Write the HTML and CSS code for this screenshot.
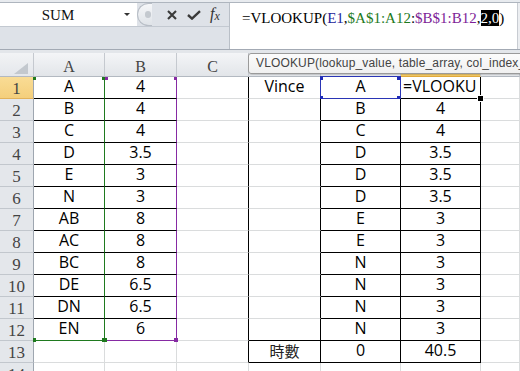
FILE: index.html
```html
<!DOCTYPE html>
<html>
<head>
<meta charset="utf-8">
<link rel="stylesheet" href="styles.css">
</head>
<body>
<div class="topline"></div>
<div class="fbar">
  <div class="fbar-left">
    <div class="fbar-top">
      <div class="namebox"><span class="nb-text">SUM</span><span class="nb-arrow"></span></div>
      <div class="grip"><span class="grip-dot"></span></div>
      <div class="btns">
        <svg class="ic-x" width="10" height="10" viewBox="0 0 10 10"><path d="M1 1 L9 9 M9 1 L1 9" stroke="#3a3a3a" stroke-width="2.1" fill="none"/></svg>
        <svg class="ic-ok" width="14" height="10" viewBox="0 0 14 10"><path d="M1 5 L5 8.6 L13 1.2" stroke="#3a3a3a" stroke-width="2.4" fill="none"/></svg>
        <span class="fx">f<span class="fx-x">x</span></span>
      </div>
    </div>
  </div>
  <div class="formula">=VLOOKUP(<span class="ref-e">E1</span>,<span class="ref-a">$A$1:A12</span>:<span class="ref-b">$B$1:B12</span>,<span class="sel">2,0</span>)</div>
  <div class="expand"></div>
</div>
<div class="strip"></div>
<div class="sheet">
  <div class="grid">
    <div class="c corner"><svg width="14" height="11" viewBox="0 0 14 11"><polygon points="14,0 14,11 0,11" fill="#c3c8ce"/></svg></div>
    <div class="c ch">A</div><div class="c ch">B</div><div class="c ch">C</div><div class="c ch"></div><div class="c ch"></div><div class="c ch hl"></div><div class="c ch"></div>

    <div class="c rh hl">1</div><div class="c kb gr">A</div><div class="c kb pr">4</div><div class="c kr"></div><div class="c kr">Vince</div><div class="c kr kb">A</div><div class="c kr kb left">=VLOOKU</div><div class="c"></div>
    <div class="c rh">2</div><div class="c kb gr">B</div><div class="c kb pr">4</div><div class="c kr"></div><div class="c kr"></div><div class="c kr kb">B</div><div class="c kr kb">4</div><div class="c"></div>
    <div class="c rh">3</div><div class="c kb gr">C</div><div class="c kb pr">4</div><div class="c kr"></div><div class="c kr"></div><div class="c kr kb">C</div><div class="c kr kb">4</div><div class="c"></div>
    <div class="c rh">4</div><div class="c kb gr">D</div><div class="c kb pr">3.5</div><div class="c kr"></div><div class="c kr"></div><div class="c kr kb">D</div><div class="c kr kb">3.5</div><div class="c"></div>
    <div class="c rh">5</div><div class="c kb gr">E</div><div class="c kb pr">3</div><div class="c kr"></div><div class="c kr"></div><div class="c kr kb">D</div><div class="c kr kb">3.5</div><div class="c"></div>
    <div class="c rh">6</div><div class="c kb gr">N</div><div class="c kb pr">3</div><div class="c kr"></div><div class="c kr"></div><div class="c kr kb">D</div><div class="c kr kb">3.5</div><div class="c"></div>
    <div class="c rh">7</div><div class="c kb gr">AB</div><div class="c kb pr">8</div><div class="c kr"></div><div class="c kr"></div><div class="c kr kb">E</div><div class="c kr kb">3</div><div class="c"></div>
    <div class="c rh">8</div><div class="c kb gr">AC</div><div class="c kb pr">8</div><div class="c kr"></div><div class="c kr"></div><div class="c kr kb">E</div><div class="c kr kb">3</div><div class="c"></div>
    <div class="c rh">9</div><div class="c kb gr">BC</div><div class="c kb pr">8</div><div class="c kr"></div><div class="c kr"></div><div class="c kr kb">N</div><div class="c kr kb">3</div><div class="c"></div>
    <div class="c rh">10</div><div class="c kb gr">DE</div><div class="c kb pr">6.5</div><div class="c kr"></div><div class="c kr"></div><div class="c kr kb">N</div><div class="c kr kb">3</div><div class="c"></div>
    <div class="c rh">11</div><div class="c kb gr">DN</div><div class="c kb pr">6.5</div><div class="c kr"></div><div class="c kr"></div><div class="c kr kb">N</div><div class="c kr kb">3</div><div class="c"></div>
    <div class="c rh">12</div><div class="c gb gr">EN</div><div class="c pb pr">6</div><div class="c kr"></div><div class="c kr kb"></div><div class="c kr kb">N</div><div class="c kr kb">3</div><div class="c"></div>
    <div class="c rh">13</div><div class="c"></div><div class="c"></div><div class="c kr"></div><div class="c kr kb cjk">時數</div><div class="c kr kb">0</div><div class="c kr kb">40.5</div><div class="c"></div>
    <div class="c rh">14</div><div class="c"></div><div class="c"></div><div class="c"></div><div class="c"></div><div class="c"></div><div class="c"></div><div class="c"></div>
  </div>

  <div class="mk sq-g" style="left:33px;top:24px;width:3px;height:3px"></div>
  <div class="mk sq-g" style="left:102px;top:24px;width:3px;height:3px"></div>
  <div class="mk sq-p" style="left:105px;top:24px;width:3px;height:3px"></div>
  <div class="mk sq-p" style="left:174px;top:24px;width:3px;height:3px"></div>
  <div class="mk sq-g" style="left:33px;top:285px;width:3px;height:4px"></div>
  <div class="mk sq-g" style="left:102px;top:285px;width:5px;height:4px"></div>
  <div class="mk sq-p" style="left:174px;top:285px;width:4px;height:4px"></div>

  <div class="mk e1box"></div>
  <div class="mk sq-b" style="left:320px;top:24px"></div>
  <div class="mk sq-b" style="left:320px;top:43px"></div>
  <div class="mk sq-b" style="left:397px;top:24px"></div>
  <div class="mk sq-b" style="left:397px;top:43px"></div>
  <div class="mk handle"></div>

  <div class="tip">VLOOKUP(lookup_value, table_array, col_index_</div>
</div>
</body>
</html>
```

FILE: styles.css
```css
html, body {
  margin: 0;
  padding: 0;
}
body {
  width: 520px;
  height: 371px;
  overflow: hidden;
  background: #dee2e8;
  position: relative;
}
.topline {
  height: 2px;
  background: #e8ebef;
  border-bottom: 1px solid #aeb5be;
}
.fbar {
  display: flex;
  height: 46px;
  border-bottom: 1px solid #a3aab4;
}
.fbar-left {
  width: 229px;
  border-right: 1px solid #b9bfc7;
  background: #dee2e8;
}
.fbar-top {
  display: flex;
  height: 23px;
  border-bottom: 1px solid #c3c9d1;
}
.namebox {
  width: 137px;
  background: #fff;
  display: flex;
  align-items: center;
}
.nb-text {
  width: 116px;
  text-align: center;
  font-family: "Liberation Serif", serif;
  font-size: 15px;
  color: #111;
  padding-top: 1px;
}
.nb-arrow {
  margin-left: 8px;
  width: 0;
  height: 0;
  border-left: 3px solid transparent;
  border-right: 3px solid transparent;
  border-top: 3px solid #333;
}
.grip {
  width: 15px;
  box-sizing: border-box;
  border: 1px solid #b8bec6;
  border-right: none;
  border-radius: 12px 0 0 12px;
  background: linear-gradient(#f6f7f9, #dfe3e8);
  display: flex;
  align-items: center;
  justify-content: flex-end;
}
.grip-dot {
  width: 6px;
  height: 7px;
  border-radius: 3px;
  background: #c4c9cf;
  margin-right: 1px;
}
.btns {
  flex: 1;
  display: flex;
  align-items: center;
}
.ic-x {
  margin-left: 15px;
}
.ic-ok {
  margin-left: 10px;
}
.fx {
  margin-left: 9px;
  font-family: "Liberation Serif", serif;
  font-style: italic;
  font-size: 16px;
  color: #333;
  line-height: 16px;
}
.fx-x {
  font-size: 12px;
  position: relative;
  top: 1px;
}
.formula {
  flex: 1;
  background: #fff;
  font-family: "Liberation Serif", serif;
  font-size: 15px;
  line-height: 20px;
  padding: 5px 0 0 12px;
  color: #000;
  white-space: nowrap;
  overflow: hidden;
}
.ref-e { color: #23239a; }
.ref-a { color: #1d7a1d; }
.ref-b { color: #7d1e97; }
.sel {
  background: #000;
  color: #fff;
}
.expand {
  width: 2px;
  border-left: 1px solid #c8ccd2;
  background: #eceef1;
}
.strip {
  height: 3px;
  background: #e3e6ea;
}
.sheet {
  position: relative;
  background: #fff;
  height: 318px;
  overflow: hidden;
}
.grid {
  display: grid;
  grid-template-columns: 34px 71px 72px 72px 72px 80px 80px 39px;
  grid-template-rows: 24px repeat(14, 22px);
}
.c {
  box-sizing: border-box;
  border-right: 1px solid #dadcdd;
  border-bottom: 1px solid #dadcdd;
  background: #fff;
  font-family: "Open Sans", sans-serif;
  font-size: 16px;
  line-height: 19px;
  color: #000;
  text-align: center;
  white-space: nowrap;
}
.cjk {
  font-family: "Noto Sans CJK TC", sans-serif;
  font-size: 15px;
  line-height: 20px;
  color: #222;
}
.left {
  text-align: left;
  padding-left: 2px;
  overflow: hidden;
}
.corner {
  background: linear-gradient(#f2f3f5, #e4e7eb);
  border-right: 1px solid #c5c9cf;
  border-bottom: 1px solid #b3b9c1;
  display: flex;
  align-items: flex-end;
  justify-content: flex-end;
  padding: 0 5px 2px 0;
}
.corner svg { display: block; }
.ch {
  background: linear-gradient(#f4f5f7, #e2e5e9);
  border-right: 1px solid #c5c9cf;
  border-bottom: 1px solid #b3b9c1;
  font-family: "Liberation Serif", serif;
  font-size: 16px;
  line-height: 20px;
  padding-top: 4px;
  color: #444;
}
.ch.hl {
  background: linear-gradient(#f9e3a6, #f1c764);
  border-bottom-color: #e0a93b;
}
.rh {
  background: #e4e7eb;
  border-right: 1px solid #9ea6b0;
  border-bottom: 1px solid #c2c7cd;
  font-family: "Liberation Serif", serif;
  font-size: 17px;
  line-height: 20px;
  padding-top: 2px;
  color: #444;
}
.rh.hl {
  background: linear-gradient(#f9dc95, #f4cf7c);
  border-bottom-color: #e2b25a;
}
.kb { border-bottom-color: #000; }
.kr { border-right-color: #000; }
.gr { border-right-color: #1f7a1f; }
.gb { border-bottom-color: #1f7a1f; }
.pr { border-right-color: #862aa3; }
.pb { border-bottom-color: #862aa3; }
.mk {
  position: absolute;
}
.sq-g { background: #1f7a1f; }
.sq-p { background: #862aa3; }
.sq-b {
  background: #1f2bb8;
  width: 3px;
  height: 3px;
}
.e1box {
  left: 320px;
  top: 23px;
  width: 81px;
  height: 23px;
  box-sizing: border-box;
  border: 1px solid #2a35b5;
}
.handle {
  left: 477px;
  top: 42px;
  width: 5px;
  height: 5px;
  background: #000;
  border: 1px solid #fff;
}
.tip {
  position: absolute;
  left: 248px;
  top: 0;
  width: 330px;
  height: 21px;
  box-sizing: border-box;
  border: 1px solid #9a9a9a;
  border-radius: 3px;
  background: linear-gradient(#fcfcfc, #f0f0f0);
  box-shadow: 1px 1px 1px rgba(0, 0, 0, 0.15);
  font-family: "Liberation Sans", sans-serif;
  font-size: 12px;
  letter-spacing: 0.15px;
  line-height: 18px;
  padding-left: 7px;
  color: #444;
  white-space: nowrap;
  overflow: hidden;
}
```
